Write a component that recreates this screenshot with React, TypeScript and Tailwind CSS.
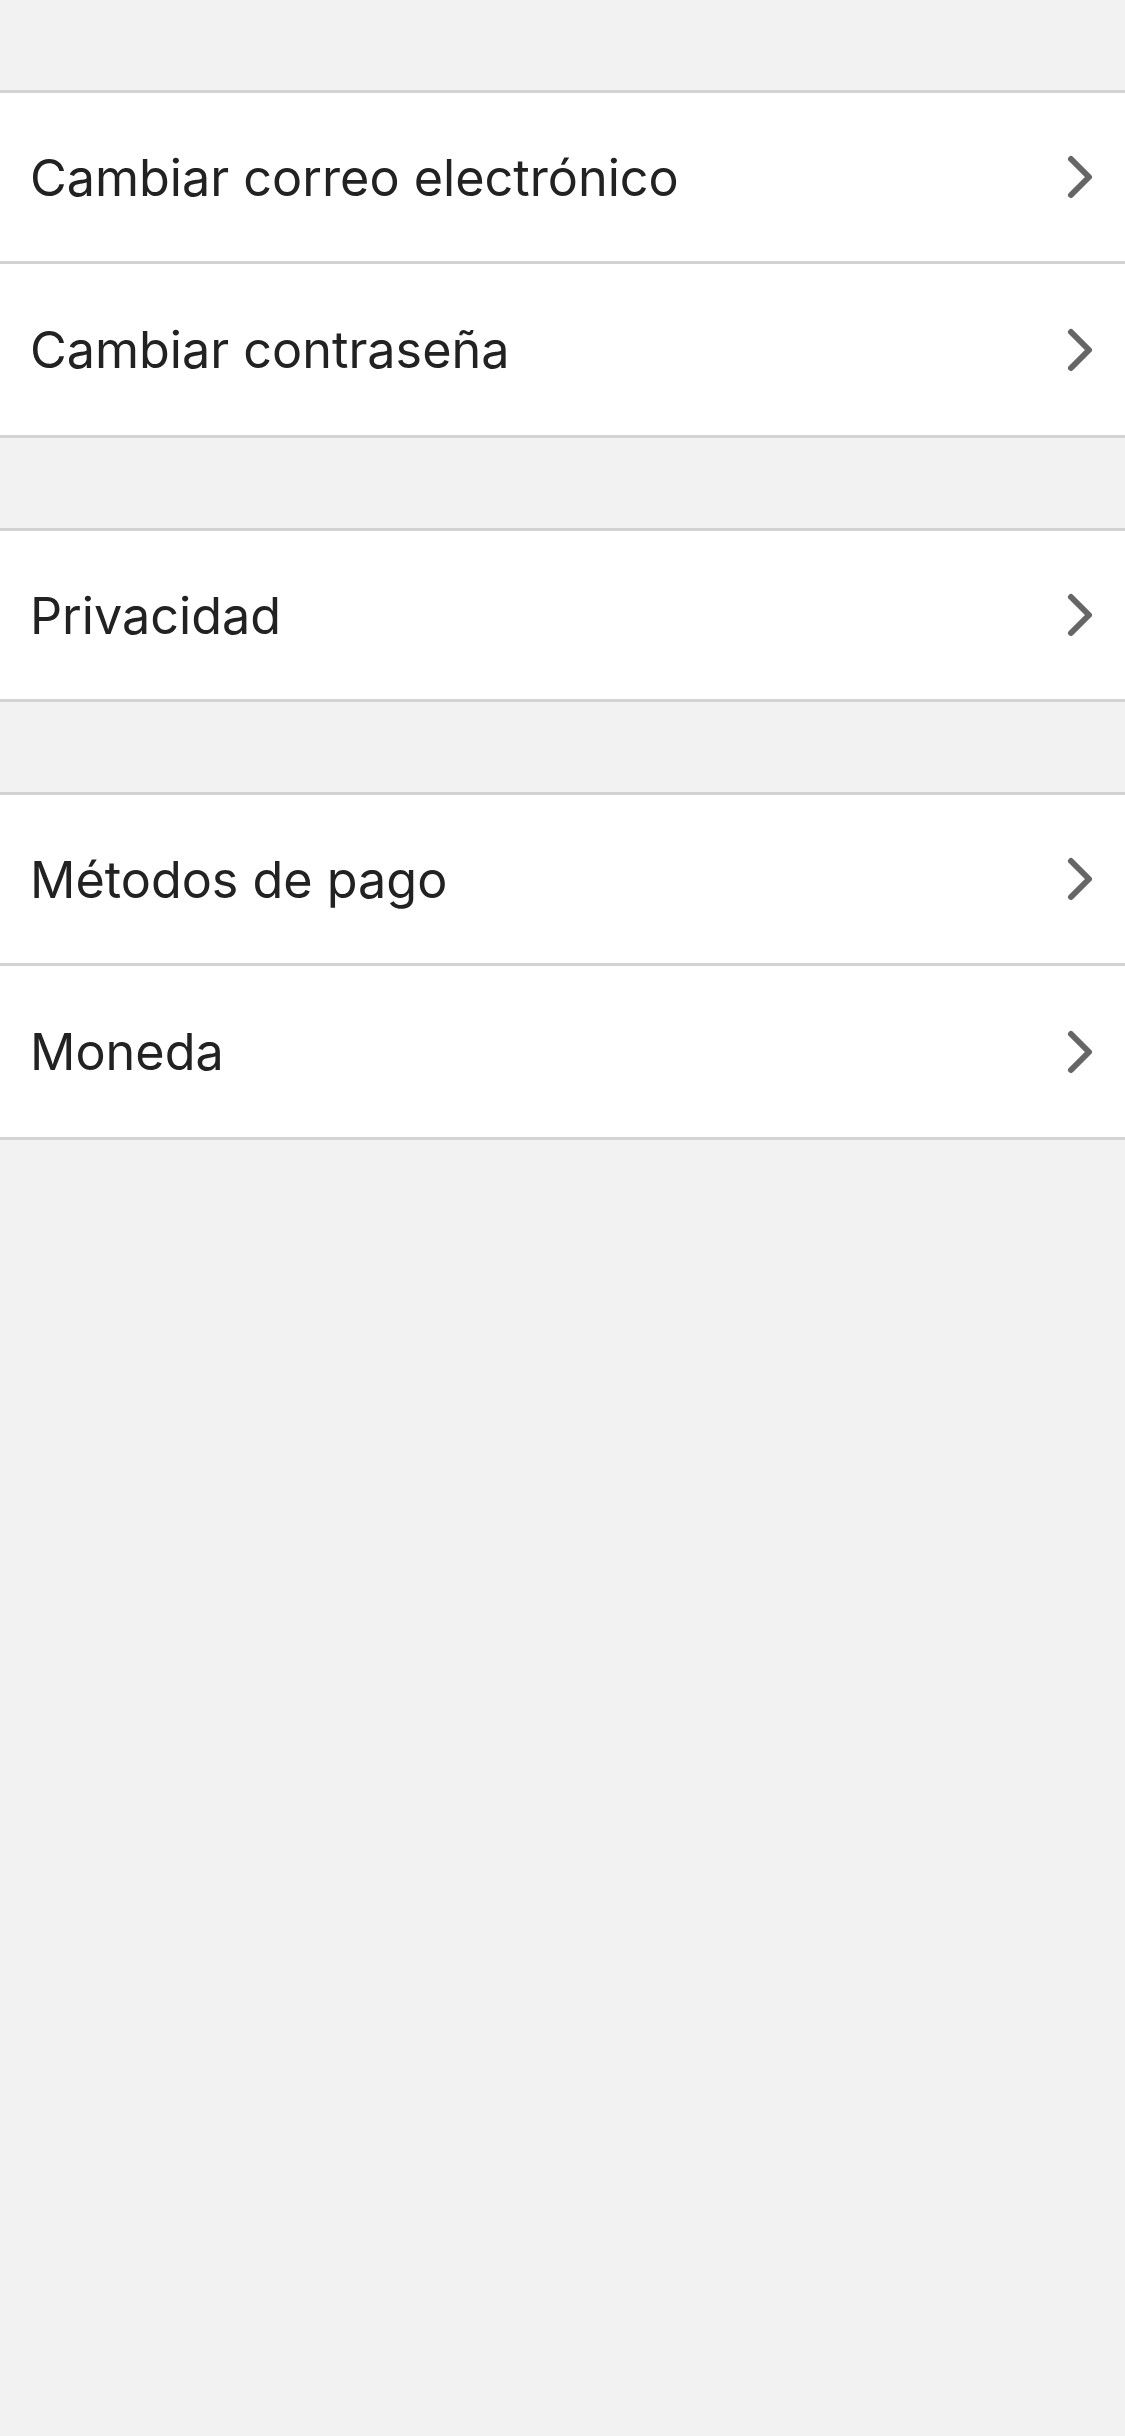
import React from 'react'

type Row = { label: string }

const groups: Row[][] = [
  [{ label: 'Cambiar correo electrónico' }, { label: 'Cambiar contraseña' }],
  [{ label: 'Privacidad' }],
  [{ label: 'Métodos de pago' }, { label: 'Moneda' }],
]

function Chevron() {
  return (
    <svg width="30" height="48" viewBox="0 0 30 48" className="shrink-0">
      <path d="M6 6 L24 24 L6 42" fill="none" stroke="#666666" strokeWidth="6" strokeLinecap="round" strokeLinejoin="round" />
    </svg>
  )
}

export default function App() {
  return (
    <div className="min-h-[2436px] bg-[#f2f2f2] pt-[90px]" style={{ fontFamily: 'Inter, "Noto Sans", sans-serif' }}>
      <div className="flex flex-col gap-[90px]">
        {groups.map((group, gi) => (
          <div key={gi} className="bg-white border-y-[3px] border-[#d3d3d3]">
            {group.map((row, ri) => {
              const last = ri === group.length - 1
              const height = group.length === 1 ? 'h-[168px]' : 'h-[171px]'
              return (
                <div
                  key={row.label}
                  className={`flex items-center justify-between pl-[30px] pr-[30px] ${height} ${
                    last ? '' : 'border-b-[3px] border-[#d3d3d3]'
                  }`}
                >
                  <span className="text-[50.3px] leading-none text-[#222222] pt-[2px]">{row.label}</span>
                  <Chevron />
                </div>
              )
            })}
          </div>
        ))}
      </div>
    </div>
  )
}
